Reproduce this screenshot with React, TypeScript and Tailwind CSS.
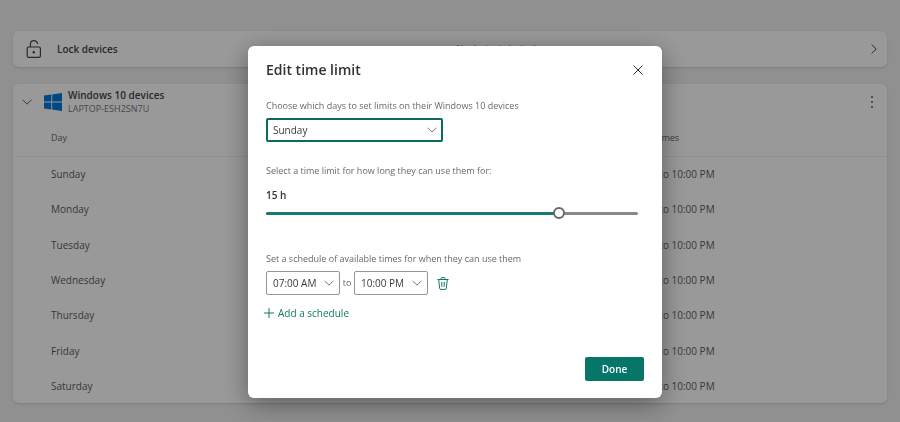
import { useState } from 'react'

const days = ['Sunday', 'Monday', 'Tuesday', 'Wednesday', 'Thursday', 'Friday', 'Saturday']
const times = ['07:00 AM', '08:00 AM', '09:00 PM', '10:00 PM']

function Chevron({ className }: { className?: string }) {
  return (
    <svg viewBox="0 0 10 10" fill="none" stroke="currentColor" className={className} aria-hidden="true">
      <path d="M0.5 2.7 L5 7.2 L9.5 2.7" />
    </svg>
  )
}

function LockIcon() {
  return (
    <svg viewBox="0 0 16 20" fill="none" stroke="currentColor" strokeWidth="1.2" className="h-5 w-4" aria-hidden="true">
      <rect x="1.2" y="8" width="13.2" height="10.4" rx="1.4" />
      <path d="M4.4 8 V5 C4.4 2.8 5.8 1.6 7.8 1.6 C9.8 1.6 11.2 2.8 11.6 4.8" />
      <circle cx="7.8" cy="13.2" r="1.2" fill="currentColor" stroke="none" />
    </svg>
  )
}

function WindowsLogo() {
  return (
    <svg viewBox="0 0 18 18" fill="#0078d7" className="size-[18px]" aria-hidden="true">
      <path d="M0 2.6 L7.3 1.6 V8.5 H0 Z M8.2 1.4 L18 0 V8.5 H8.2 Z M0 9.4 H7.3 V16.4 L0 15.4 Z M8.2 9.4 H18 V18 L8.2 16.5 Z" />
    </svg>
  )
}

function TrashIcon() {
  return (
    <svg viewBox="0 0 12 13" fill="none" stroke="currentColor" className="h-[13px] w-3" aria-hidden="true">
      <path d="M0.5 2.5 H11.5 M4 2.5 V1.5 C4 0.9 4.3 0.6 4.9 0.6 H7.1 C7.7 0.6 8 0.9 8 1.5 V2.5" />
      <path d="M1.7 2.5 L2.6 11.2 C2.7 12 3.1 12.4 3.8 12.4 H8.2 C8.9 12.4 9.3 12 9.4 11.2 L10.3 2.5" />
      <path d="M4.8 5 V9.8 M7.2 5 V9.8" />
    </svg>
  )
}

function TimeSelect({ label, value, onChange }: { label: string; value: string; onChange: (value: string) => void }) {
  return (
    <div className="relative">
      <select
        aria-label={label}
        value={value}
        onChange={(e) => onChange(e.target.value)}
        className="block h-6 w-[74px] appearance-none rounded-xs border border-[#979593] bg-white pl-1.5 text-[10px] text-[#3b3a39] outline-none"
      >
        {times.map((time) => (
          <option key={time}>{time}</option>
        ))}
      </select>
      <Chevron className="pointer-events-none absolute top-[7px] right-1.5 size-2.5 text-[#797775]" />
    </div>
  )
}

function DevicesPage() {
  return (
    <main className="flex min-h-screen flex-col gap-[17px] px-[13px] pt-[31px] pb-[19px]">
      <button className="flex h-9 items-center rounded-md bg-white pr-2 pl-[13px] text-left text-[10px] shadow-sm">
        <span className="text-[#484644]">
          <LockIcon />
        </span>
        <span className="w-[414px] pl-[15px] font-semibold text-[#484644]">Lock devices</span>
        <span className="text-[9px] text-[#797775]">No device is locked</span>
        <Chevron className="ml-auto size-2.5 -rotate-90 text-[#484644]" />
      </button>

      <section className="flex flex-1 flex-col rounded-md bg-white shadow-sm">
        <header className="flex h-9 items-center pr-2.5 pl-[9px]">
          <button aria-label="Collapse" className="text-[#605e5c]">
            <Chevron className="size-2.5" />
          </button>
          <div className="ml-3">
            <WindowsLogo />
          </div>
          <div className="ml-1.5">
            <h2 className="text-[10px] leading-[14px] font-semibold text-[#484644]">Windows 10 devices</h2>
            <p className="text-[9px] leading-[14px] text-[#797775]">LAPTOP-ESH2SN7U</p>
          </div>
          <button aria-label="More options" className="ml-auto flex w-2.5 flex-col items-center gap-[3px] text-[#605e5c]">
            <span className="size-0.5 rounded-full bg-current" />
            <span className="size-0.5 rounded-full bg-current" />
            <span className="size-0.5 rounded-full bg-current" />
          </button>
        </header>
        <table className="w-full flex-1 table-fixed text-left text-[#5f5d5b]">
          <thead>
            <tr className="h-9 border-b border-[#f3f2f1] text-[9px] text-[#6b6967]">
              <th className="w-[69%] pl-[38px] font-normal">Day</th>
              <th className="font-normal">Available times</th>
            </tr>
          </thead>
          <tbody className="text-[10px]">
            {days.map((day) => (
              <tr key={day} className="h-[35px]">
                <td className="pt-0.5 pl-[38px]">{day}</td>
                <td className="pt-0.5 pl-[3px]">7:00 AM to 10:00 PM</td>
              </tr>
            ))}
          </tbody>
        </table>
      </section>
    </main>
  )
}

function EditTimeLimit() {
  const [day, setDay] = useState('Sunday')
  const [hours, setHours] = useState(15)
  const [from, setFrom] = useState('07:00 AM')
  const [to, setTo] = useState('10:00 PM')
  const percent = (hours / 19) * 100

  return (
    <div
      role="dialog"
      aria-modal="true"
      aria-labelledby="dialog-title"
      className="w-full max-w-[414px] rounded-md bg-white px-[18px] pt-3 pb-[17px] text-[#6b6967] shadow-[0_6px_26px_rgba(0,0,0,0.4)]"
    >
      <div className="flex items-center justify-between">
        <h1 id="dialog-title" className="text-sm leading-6 font-semibold text-[#323130]">
          Edit time limit
        </h1>
        <button aria-label="Close" className="px-px text-[#323130]">
          <svg viewBox="0 0 10 10" fill="none" stroke="currentColor" className="size-2.5" aria-hidden="true">
            <path d="M0.5 0.5 L9.5 9.5 M9.5 0.5 L0.5 9.5" />
          </svg>
        </button>
      </div>

      <label htmlFor="day" className="mt-4 block text-[9px] leading-4">
        Choose which days to set limits on their Windows 10 devices
      </label>
      <div className="relative mt-1 w-[177px]">
        <select
          id="day"
          value={day}
          onChange={(e) => setDay(e.target.value)}
          className="block h-6 w-full appearance-none rounded-xs border-2 border-[#0b6a5d] bg-white pl-[5px] text-[10px] text-[#3b3a39] outline-none"
        >
          {days.map((name) => (
            <option key={name}>{name}</option>
          ))}
        </select>
        <Chevron className="pointer-events-none absolute top-[7px] right-1.5 size-2.5 text-[#797775]" />
      </div>

      <label htmlFor="hours" className="mt-[21px] block text-[9px] leading-4">
        Select a time limit for how long they can use them for:
      </label>
      <output htmlFor="hours" className="mt-2 block text-[10px] leading-4 font-semibold text-[#323130]">
        {hours} h
      </output>
      <div className="relative mt-1 mr-1.5 flex h-3 items-center">
        <div className="h-[3px] flex-1 rounded-full bg-[#8a8886]">
          <div className="h-full rounded-full bg-[#1a7a6e]" style={{ width: `${percent}%` }} />
        </div>
        <input
          id="hours"
          type="range"
          min={0}
          max={19}
          value={hours}
          onChange={(e) => setHours(Number(e.target.value))}
          className="absolute inset-y-0 -left-1 w-[calc(100%+8px)] appearance-none bg-transparent outline-none [&::-webkit-slider-thumb]:size-3 [&::-webkit-slider-thumb]:appearance-none [&::-webkit-slider-thumb]:rounded-full [&::-webkit-slider-thumb]:border-2 [&::-webkit-slider-thumb]:border-[#6b6967] [&::-webkit-slider-thumb]:bg-white"
        />
      </div>

      <p className="mt-8 text-[9px] leading-4">Set a schedule of available times for when they can use them</p>
      <div className="mt-1 flex items-center">
        <TimeSelect label="From" value={from} onChange={setFrom} />
        <span className="w-3.5 text-center text-[9px]">to</span>
        <TimeSelect label="To" value={to} onChange={setTo} />
        <button aria-label="Delete schedule" className="ml-[9px] text-[#117865]">
          <TrashIcon />
        </button>
      </div>
      <button className="mt-2.5 -ml-0.5 flex items-center gap-1 text-[10px] leading-4 text-[#117865]">
        <svg viewBox="0 0 10 10" fill="none" stroke="currentColor" className="size-2.5" aria-hidden="true">
          <path d="M5 0 V10 M0 5 H10" />
        </svg>
        Add a schedule
      </button>

      <div className="mt-9 flex justify-end">
        <button className="h-6 w-[59px] rounded-xs bg-[#077568] text-[10px] font-semibold text-white">Done</button>
      </div>
    </div>
  )
}

export default function App() {
  return (
    <div className="min-h-screen bg-[#f0f0f0] font-['Open_Sans','Noto_Sans',sans-serif]">
      <DevicesPage />
      <div className="fixed inset-0 flex items-start justify-center bg-black/40 pt-[46px] pl-[10px]">
        <EditTimeLimit />
      </div>
    </div>
  )
}
